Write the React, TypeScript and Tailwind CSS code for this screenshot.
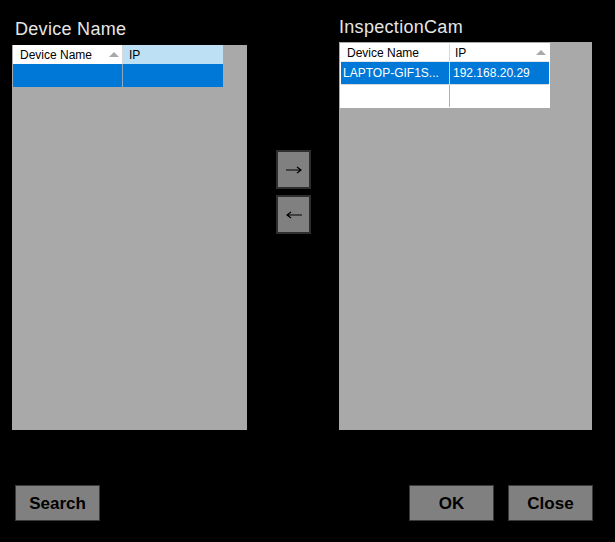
import React from "react";

const font = { fontFamily: '"Liberation Sans", Arial, sans-serif' };

function SortUp() {
  return (
    <svg width="10" height="5" viewBox="0 0 10 5" className="shrink-0">
      <polygon points="0,5 5,0 10,5" fill="#a8a8a8" />
    </svg>
  );
}

function ArrowButton({ dir }: { dir: "right" | "left" }) {
  return (
    <button className="w-[35px] h-[39px] bg-[#808080] border-2 border-[#2e2e2e] flex items-center justify-center">
      <svg width="18" height="8" viewBox="0 0 18 8">
        {dir === "right" ? (
          <path d="M1 4 H16 M12 1 L16 4 L12 7" stroke="#000" strokeWidth="1.2" fill="none" />
        ) : (
          <path d="M17 4 H2 M6 1 L2 4 L6 7" stroke="#000" strokeWidth="1.2" fill="none" />
        )}
      </svg>
    </button>
  );
}

function BottomButton({ label }: { label: string }) {
  return (
    <button className="w-[85px] h-[36px] bg-[#808080] border border-[#3a3a3a] text-black text-[17px] leading-none font-bold">
      {label}
    </button>
  );
}

export default function App() {
  return (
    <div className="w-[615px] h-[542px] bg-black flex flex-col overflow-hidden" style={font}>
      <div className="flex items-start">
        {/* left list */}
        <div className="ml-[12px] w-[235px] flex flex-col">
          <div className="mt-[19px] ml-[3px] h-[21px] leading-[21px] text-[18px] tracking-[0.3px] text-[#e6e6e6]">
            Device Name
          </div>
          <div className="mt-[5px] h-[385px] bg-[#a9a9a9] pl-[1px]">
            <div className="flex h-[19px] text-[12px] text-black">
              <div className="w-[109px] bg-white flex items-center pl-[7px] pr-[3px]">
                <span className="flex-1">Device Name</span>
                <SortUp />
              </div>
              <div className="w-[1px] bg-[#d8d8d8]" />
              <div className="w-[100px] bg-[#bee0f5] flex items-center pl-[6px]">IP</div>
            </div>
            <div className="flex h-[23px] w-[210px] bg-[#0078d7]">
              <div className="w-[109px]" />
              <div className="w-[1px] bg-[#8fa8bd]" />
              <div className="w-[100px]" />
            </div>
          </div>
        </div>

        {/* move buttons */}
        <div className="ml-[29px] mt-[150px] flex flex-col gap-[6px]">
          <ArrowButton dir="right" />
          <ArrowButton dir="left" />
        </div>

        {/* right list */}
        <div className="ml-[28px] w-[253px] flex flex-col">
          <div className="mt-[17px] h-[21px] leading-[21px] text-[18px] tracking-[0.3px] text-[#e6e6e6]">
            InspectionCam
          </div>
          <div className="mt-[4px] h-[388px] bg-[#a9a9a9] pl-[1px] pt-[1px]">
            <div className="w-[210px] bg-white border border-white text-[12px]">
              <div className="flex h-[18px] text-black border-b border-[#e4e4e4]">
                <div className="w-[108px] flex items-center pl-[6px]">Device Name</div>
                <div className="w-[1px] bg-[#d8d8d8]" />
                <div className="flex-1 flex items-center pl-[5px] pr-[3px]">
                  <span className="flex-1">IP</span>
                  <SortUp />
                </div>
              </div>
              <div className="flex h-[22px] bg-[#0078d7] text-white">
                <div className="w-[108px] flex items-center pl-[2px] whitespace-nowrap overflow-hidden">LAPTOP-GIF1S...</div>
                <div className="w-[1px] bg-[#d0d0d0]" />
                <div className="flex-1 flex items-center pl-[3px]">192.168.20.29</div>
              </div>
              <div className="h-[1px] bg-[#d8d8d8]" />
              <div className="flex h-[22px] bg-white">
                <div className="w-[108px]" />
                <div className="w-[1px] bg-[#b0b0b0]" />
                <div className="flex-1" />
              </div>
            </div>
          </div>
        </div>
      </div>

      {/* bottom buttons */}
      <div className="mt-[55px] flex items-center pl-[15px] pr-[22px]">
        <BottomButton label="Search" />
        <div className="flex-1" />
        <div className="flex gap-[14px]">
          <BottomButton label="OK" />
          <BottomButton label="Close" />
        </div>
      </div>
    </div>
  );
}
